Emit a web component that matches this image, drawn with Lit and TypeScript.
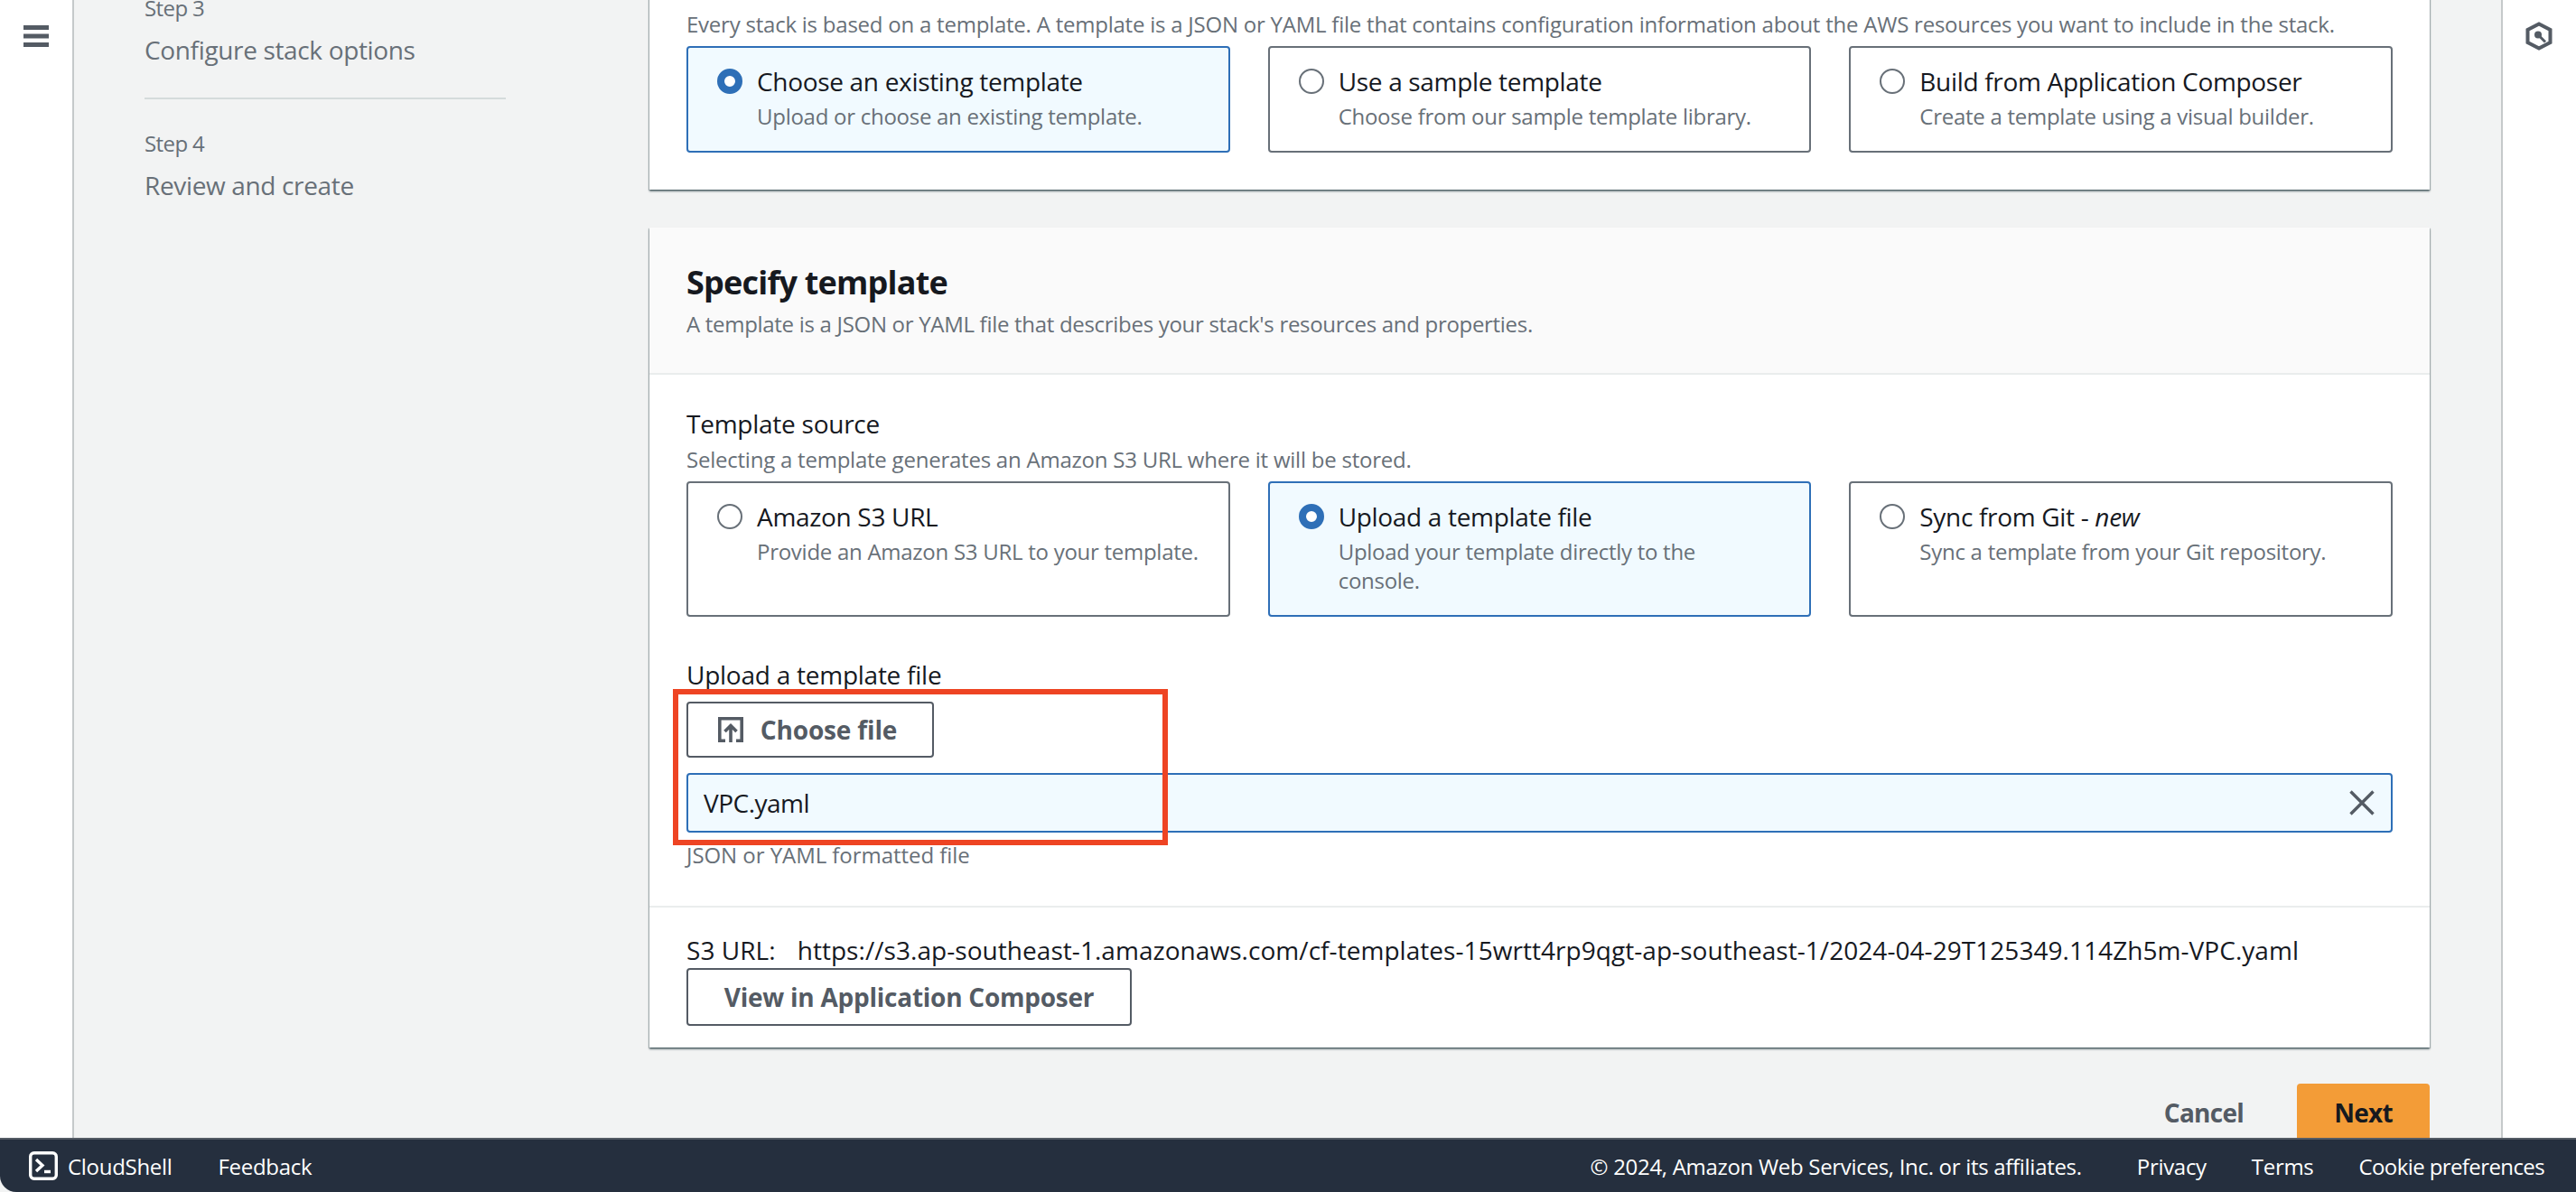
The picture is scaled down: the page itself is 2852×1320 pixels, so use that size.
import { LitElement, html, css } from "lit";
import { customElement } from "lit/decorators.js";

interface TileData {
    title: unknown;
    sub: unknown;
    on?: boolean;
}

const stackTiles: TileData[] = [
    { title: "Choose an existing template", sub: "Upload or choose an existing template.", on: true },
    { title: "Use a sample template", sub: "Choose from our sample template library." },
    { title: "Build from Application Composer", sub: "Create a template using a visual builder." },
];

const sourceTiles: TileData[] = [
    { title: "Amazon S3 URL", sub: "Provide an Amazon S3 URL to your template." },
    { title: "Upload a template file", sub: html`Upload your template directly to the<br />console.`, on: true },
    { title: html`Sync from Git - <em>new</em>`, sub: "Sync a template from your Git repository." },
];

@customElement("app-root")
export class AppRoot extends LitElement {
    static styles = css`
        :host {
            display: flex;
            flex-direction: column;
            width: 2852px;
            height: 1320px;
            overflow: hidden;
            font-family: "Open Sans", "Noto Sans", sans-serif;
            font-size: 28px;
            color: #16191f;
            background: #f2f3f3;
        }
        .body {
            flex: 1;
            min-height: 0;
            display: flex;
            overflow: hidden;
        }
        .rail-left {
            width: 54px;
            flex: none;
            background: #fff;
            border-right: 2px solid #c5c9ca;
            padding: 28px 0 0 26px;
        }
        .burger {
            display: block;
            width: 28px;
            height: 24px;
        }
        .rail-right {
            width: 83px;
            flex: none;
            background: #fff;
            border-left: 2px solid #c5c9ca;
            padding: 24px 0 0 25px;
            box-sizing: border-box;
        }
        .hex {
            display: block;
            width: 30px;
            height: 32px;
        }
        .content {
            flex: 1;
            min-width: 0;
            display: flex;
            padding: 0 79px 0 78px;
        }
        .steps {
            width: 400px;
            flex: none;
            margin-top: -9px;
            color: #687078;
        }
        .step-no {
            font-size: 24px;
            line-height: 36px;
            letter-spacing: -0.6px;
        }
        .step-name {
            font-size: 28px;
            line-height: 40px;
            margin-top: 8px;
            letter-spacing: -0.35px;
        }
        .step-rule {
            height: 2px;
            background: #d5dbdb;
            margin: 33px 0 31px;
        }
        .main {
            margin-left: 159px;
            flex: 1;
            min-width: 0;
            margin-top: -24px;
        }
        .panel {
            background: #fff;
            box-shadow: 0 2px 2px rgba(0, 28, 36, 0.5), 1px 1px 1px rgba(0, 28, 36, 0.2), -1px 1px 1px rgba(0, 28, 36, 0.2);
        }
        .panel-top {
            padding: 35px 41px 41px;
            margin-bottom: 42px;
        }
        .desc {
            font-size: 24px;
            line-height: 32px;
            color: #687078;
            letter-spacing: -0.23px;
        }
        .tiles {
            display: grid;
            grid-template-columns: repeat(3, 1fr);
            gap: 42px;
            margin-top: 8px;
        }
        .tile {
            display: flex;
            gap: 16px;
            min-height: 118px;
            box-sizing: border-box;
            border: 2px solid #687078;
            border-radius: 4px;
            padding: 21px 20px 22px 32px;
            background: #fff;
        }
        .tile.on {
            border-color: #2e6fb7;
            background: #f1faff;
        }
        .radio {
            flex: none;
            width: 28px;
            height: 28px;
            margin-top: 2px;
            box-sizing: border-box;
            border: 2px solid #687078;
            border-radius: 50%;
            background: #fff;
        }
        .tile.on .radio {
            border: 8px solid #2e6fb7;
        }
        .tile-title {
            font-size: 28px;
            line-height: 32px;
            letter-spacing: -0.32px;
        }
        .tile-title em {
            font-style: italic;
        }
        .tile-sub {
            font-size: 24px;
            line-height: 32px;
            color: #687078;
            margin-top: 7px;
            letter-spacing: -0.27px;
            white-space: nowrap;
        }
        .panel-head {
            background: #fafafa;
            border-bottom: 2px solid #eaeded;
            padding: 38px 41px 38px;
        }
        .panel-title {
            font-size: 36px;
            line-height: 46px;
            font-weight: 700;
            letter-spacing: -0.8px;
            margin: 0;
        }
        .panel-head .desc {
            margin-top: 7px;
            letter-spacing: -0.3px;
        }
        .panel-body {
            padding: 36px 41px 40px;
        }
        .field-label {
            font-size: 28px;
            line-height: 36px;
            letter-spacing: -0.25px;
        }
        .field-label + .desc {
            margin-top: 6px;
        }
        .tiles.source .tile {
            min-height: 150px;
        }
        .upload {
            margin-top: 46px;
            position: relative;
        }
        .btn {
            display: flex;
            align-items: center;
            justify-content: center;
            box-sizing: border-box;
            border: 2px solid #545b64;
            border-radius: 4px;
            background: #fff;
            color: #545b64;
            font-size: 28px;
            font-weight: 700;
        }
        .btn-file {
            width: 274px;
            height: 62px;
            gap: 19px;
            padding-right: 6px;
            margin-top: 12px;
            letter-spacing: -0.15px;
        }
        .btn-file svg {
            width: 28px;
            height: 28px;
        }
        .file-box {
            display: flex;
            align-items: center;
            justify-content: space-between;
            box-sizing: border-box;
            height: 66px;
            margin-top: 17px;
            padding: 0 18px 0 17px;
            border: 2px solid #2e6fb7;
            border-radius: 4px;
            background: #f1faff;
            font-size: 28px;
            letter-spacing: -0.5px;
        }
        .file-box svg {
            width: 28px;
            height: 28px;
        }
        .hint {
            font-size: 24px;
            line-height: 32px;
            color: #687078;
            margin-top: 9px;
            letter-spacing: -0.05px;
        }
        .highlight {
            position: absolute;
            left: -15px;
            top: 34px;
            width: 548px;
            height: 173px;
            box-sizing: border-box;
            border: 6px solid #ee4423;
            pointer-events: none;
        }
        .panel-foot {
            border-top: 2px solid #eaeded;
            padding: 29px 41px 24px;
        }
        .s3 {
            display: flex;
            gap: 24px;
            font-size: 28px;
            line-height: 36px;
            letter-spacing: 0.05px;
        }
        .btn-view {
            width: 493px;
            height: 64px;
            margin-top: 2px;
            letter-spacing: -0.25px;
        }
        .actions {
            display: flex;
            justify-content: flex-end;
            align-items: flex-start;
            margin-top: 40px;
        }
        .cancel {
            font-size: 28px;
            font-weight: 700;
            line-height: 64px;
            color: #545b64;
            letter-spacing: -0.75px;
            margin-right: 59px;
        }
        .next {
            width: 147px;
            height: 64px;
            line-height: 64px;
            text-align: center;
            font-weight: 700;
            font-size: 28px;
            letter-spacing: -0.75px;
            background: #f39c37;
            border-radius: 4px 4px 0 0;
        }
        .footer {
            flex: none;
            height: 60px;
            box-sizing: border-box;
            border-top: 2px solid #545b64;
            background: #252f3e;
            color: #fff;
            display: flex;
            align-items: center;
            padding: 0 35px 0 32px;
            font-size: 24px;
            letter-spacing: -0.3px;
            border-bottom-left-radius: 18px;
        }
        .shell {
            display: flex;
            align-items: center;
            gap: 11px;
            margin-right: 51px;
        }
        .shell svg {
            width: 32px;
            height: 32px;
        }
        .spacer {
            flex: 1;
        }
        .foot-links {
            display: flex;
            gap: 50px;
        }
        .copyright {
            margin-right: 11px;
        }
        .cookie {
            letter-spacing: -0.6px;
        }
    `;

    renderTile(t: TileData) {
        return html`
            <div class="tile ${t.on ? "on" : ""}">
                <span class="radio"></span>
                <div>
                    <div class="tile-title">${t.title}</div>
                    <div class="tile-sub">${t.sub}</div>
                </div>
            </div>
        `;
    }

    render() {
        return html`
            <div class="body">
                <div class="rail-left">
                    <svg class="burger" viewBox="0 0 28 24" fill="#545b64">
                        <rect width="28" height="5" y="0"></rect>
                        <rect width="28" height="5" y="9.5"></rect>
                        <rect width="28" height="5" y="19"></rect>
                    </svg>
                </div>
                <div class="content">
                    <div class="steps">
                        <div class="step-no">Step 3</div>
                        <div class="step-name">Configure stack options</div>
                        <div class="step-rule"></div>
                        <div class="step-no">Step 4</div>
                        <div class="step-name">Review and create</div>
                    </div>
                    <div class="main">
                        <div class="panel panel-top">
                            <div class="desc">
                                Every stack is based on a template. A template is a JSON or YAML file that contains configuration information about the AWS resources you want to include in the stack.
                            </div>
                            <div class="tiles">${stackTiles.map((t) => this.renderTile(t))}</div>
                        </div>
                        <div class="panel">
                            <div class="panel-head">
                                <h2 class="panel-title">Specify template</h2>
                                <div class="desc">A template is a JSON or YAML file that describes your stack's resources and properties.</div>
                            </div>
                            <div class="panel-body">
                                <div class="field-label">Template source</div>
                                <div class="desc">Selecting a template generates an Amazon S3 URL where it will be stored.</div>
                                <div class="tiles source">${sourceTiles.map((t) => this.renderTile(t))}</div>
                                <div class="upload">
                                    <div class="field-label">Upload a template file</div>
                                    <div class="btn btn-file">
                                        <svg viewBox="0 0 28 28" fill="none" stroke="#545b64" stroke-width="3.6">
                                            <path d="M8 26.2H1.8V1.8h24.4v24.4H20"></path>
                                            <path d="M14 28V9.5M7.5 16 14 9.5l6.5 6.5"></path>
                                        </svg>
                                        Choose file
                                    </div>
                                    <div class="file-box">
                                        <span>VPC.yaml</span>
                                        <svg viewBox="0 0 28 28" fill="none" stroke="#545b64" stroke-width="3.4">
                                            <path d="M1.5 1.5l25 25M26.5 1.5l-25 25"></path>
                                        </svg>
                                    </div>
                                    <div class="hint">JSON or YAML formatted file</div>
                                    <div class="highlight"></div>
                                </div>
                            </div>
                            <div class="panel-foot">
                                <div class="s3">
                                    <span>S3 URL:</span>
                                    <span>https://s3.ap-southeast-1.amazonaws.com/cf-templates-15wrtt4rp9qgt-ap-southeast-1/2024-04-29T125349.114Zh5m-VPC.yaml</span>
                                </div>
                                <div class="btn btn-view">View in Application Composer</div>
                            </div>
                        </div>
                        <div class="actions">
                            <span class="cancel">Cancel</span>
                            <div class="next">Next</div>
                        </div>
                    </div>
                </div>
                <div class="rail-right">
                    <svg class="hex" viewBox="0 0 30 32" fill="none" stroke="#545b64" stroke-width="4">
                        <path d="M15 2.5 27.5 9v14L15 29.5 2.5 23V9z"></path>
                        <circle cx="14" cy="14.5" r="4" fill="#545b64" stroke="none"></circle>
                        <path d="M15 15.5l7 7" stroke-width="3"></path>
                    </svg>
                </div>
            </div>
            <div class="footer">
                <div class="shell">
                    <svg viewBox="0 0 32 32" fill="none" stroke="#fff" stroke-width="3.4">
                        <rect x="1.7" y="1.7" width="28.6" height="28.6" rx="4"></rect>
                        <path d="M8 9l7 6.5L8 22"></path>
                        <path d="M17 22.5h7"></path>
                    </svg>
                    <span>CloudShell</span>
                </div>
                <span>Feedback</span>
                <div class="spacer"></div>
                <div class="foot-links">
                    <span class="copyright">© 2024, Amazon Web Services, Inc. or its affiliates.</span>
                    <span>Privacy</span>
                    <span>Terms</span>
                    <span class="cookie">Cookie preferences</span>
                </div>
            </div>
        `;
    }
}
